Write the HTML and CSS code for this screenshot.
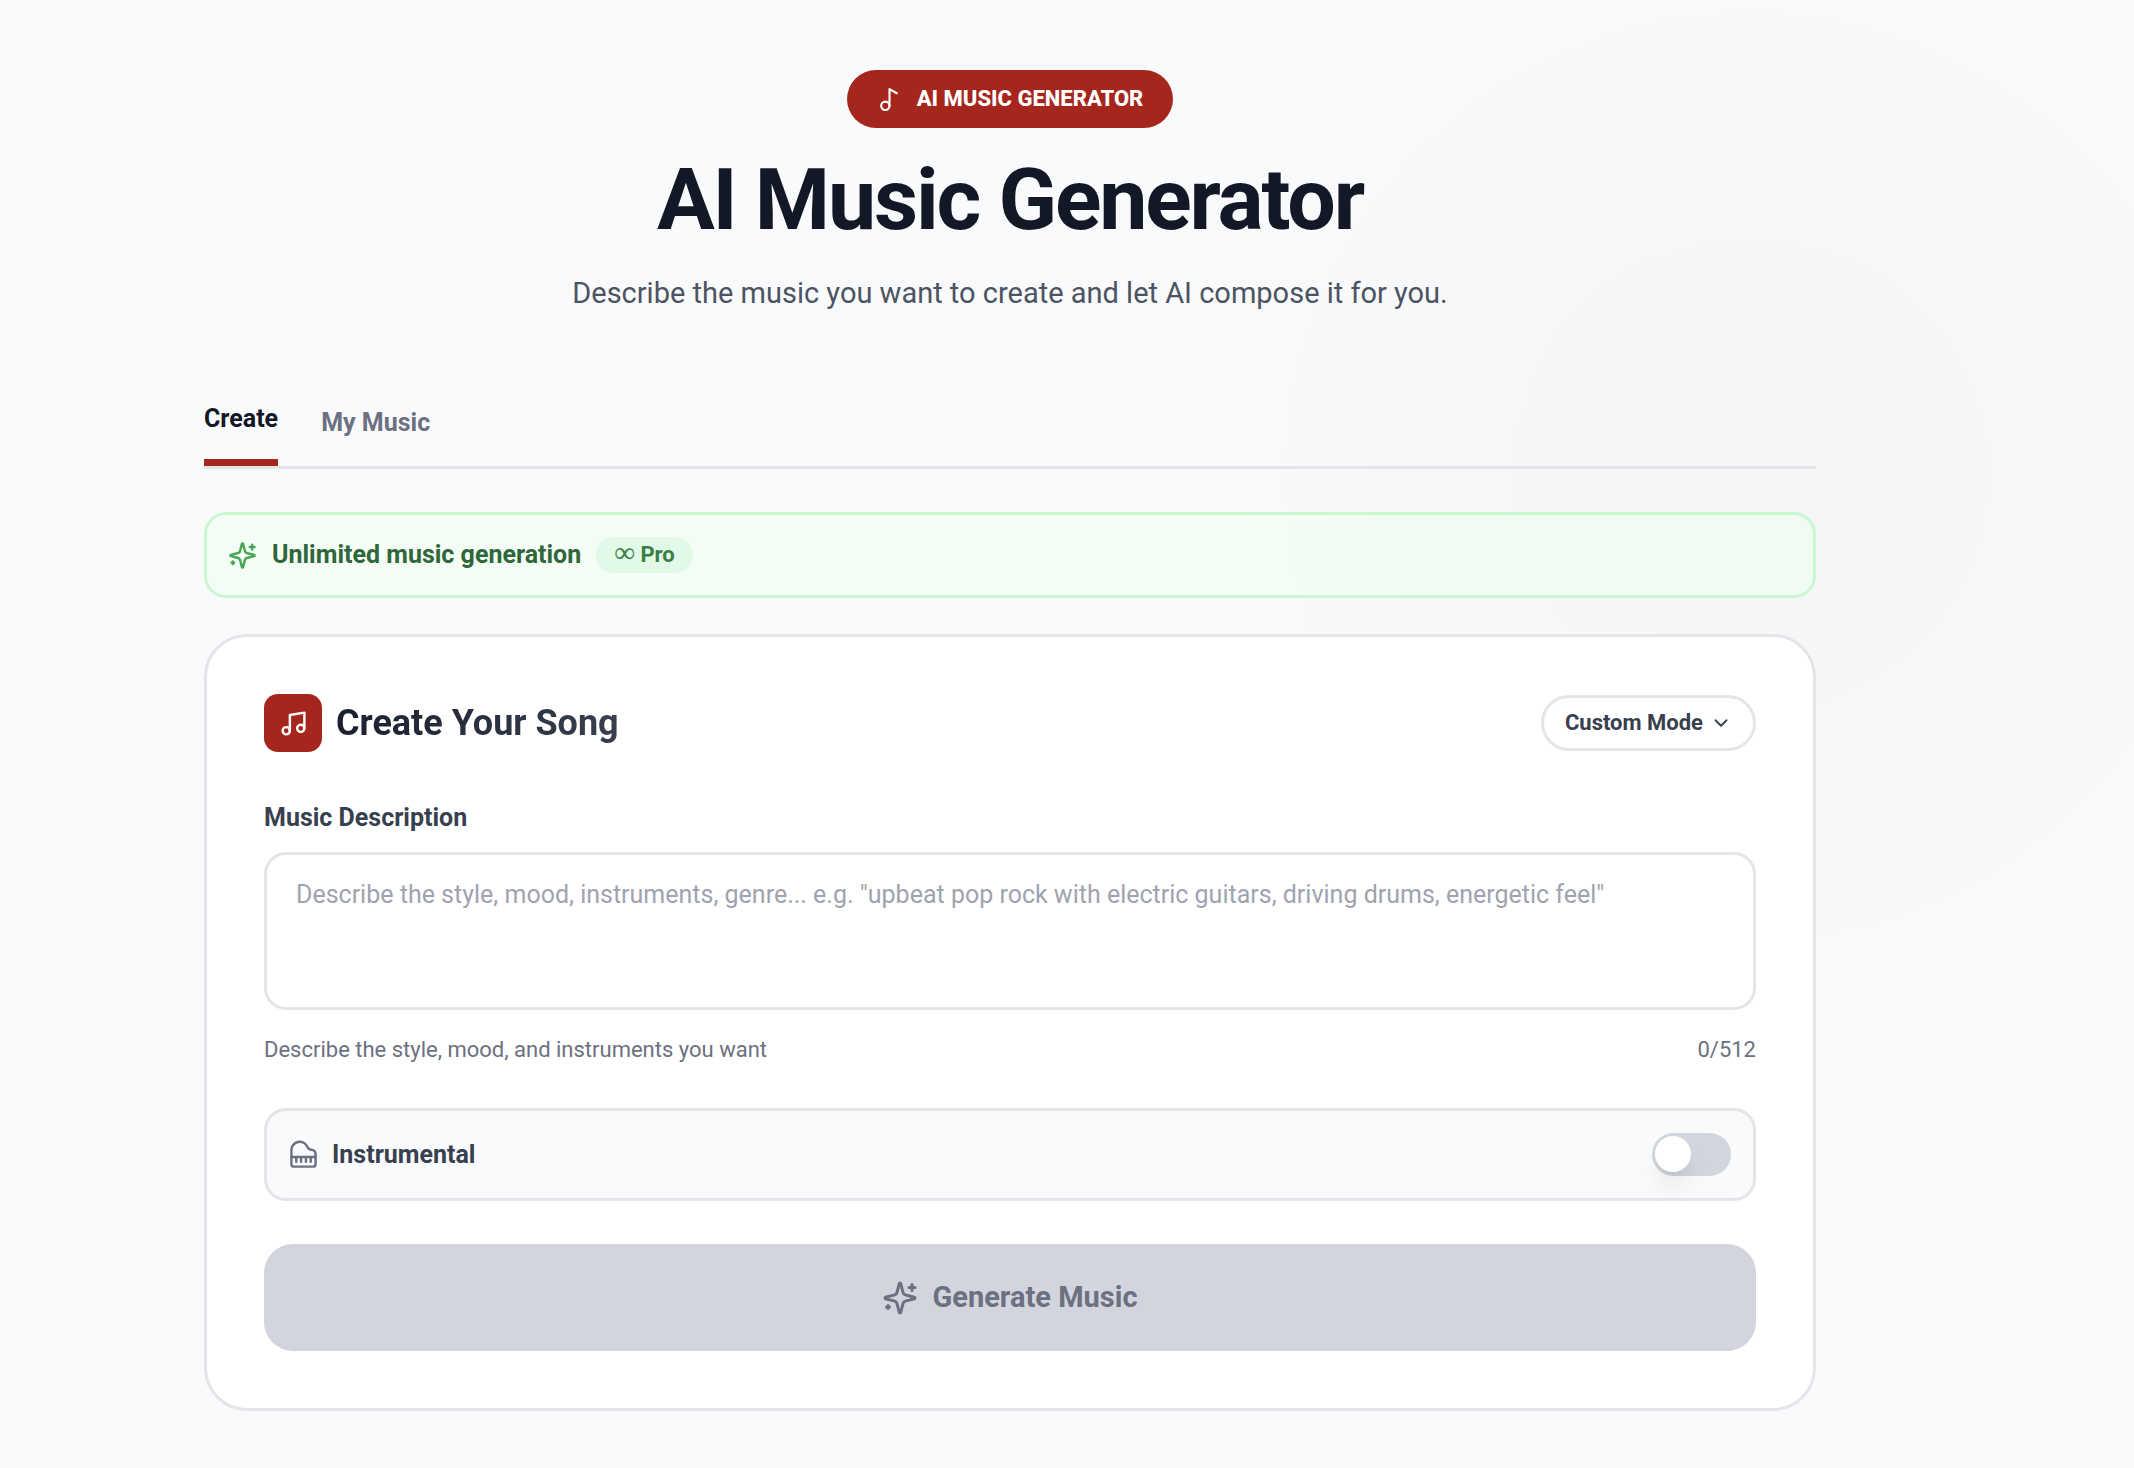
FILE: index.html
```html
<!DOCTYPE html>
<html lang="en">
<head>
  <meta charset="UTF-8" />
  <meta name="viewport" content="width=device-width, initial-scale=1.0" />
  <title>AI Music Generator</title>
  <link rel="stylesheet" href="styles.css">
</head>
<body>
  <main class="container">
    <header class="hero">
      <div class="badge">
        <svg class="icon icon-sm" viewBox="0 0 24 24"><circle cx="8" cy="18" r="4"/><path d="M12 18V2l7 4"/></svg>
        <span>AI MUSIC GENERATOR</span>
      </div>
      <h1>AI Music Generator</h1>
      <p>Describe the music you want to create and let AI compose it for you.</p>
    </header>

    <nav class="tabs">
      <button type="button" class="tab active">Create</button>
      <button type="button" class="tab">My Music</button>
    </nav>

    <div class="plan">
      <svg class="icon" viewBox="0 0 24 24"><path d="M9.937 15.5A2 2 0 0 0 8.5 14.063l-6.135-1.582a.5.5 0 0 1 0-.962L8.5 9.936A2 2 0 0 0 9.937 8.5l1.582-6.135a.5.5 0 0 1 .963 0L14.063 8.5A2 2 0 0 0 15.5 9.937l6.135 1.581a.5.5 0 0 1 0 .964L15.5 14.063a2 2 0 0 0-1.437 1.437l-1.582 6.135a.5.5 0 0 1-.963 0z"/><path d="M20 3v4M22 5h-4M4 17v2M5 18H3"/></svg>
      <span class="plan-text">Unlimited music generation</span>
      <span class="plan-tag"><span class="infinity">∞</span> Pro</span>
    </div>

    <form class="card">
      <div class="card-head">
        <div class="card-icon">
          <svg class="icon" viewBox="0 0 24 24"><path d="M9 18V5l12-2v13"/><circle cx="6" cy="18" r="3"/><circle cx="18" cy="16" r="3"/></svg>
        </div>
        <h2>Create Your Song</h2>
        <button type="button" class="mode-btn" aria-expanded="false">
          Custom Mode
          <svg class="icon icon-xs" viewBox="0 0 24 24"><path d="m6 9 6 6 6-6"/></svg>
        </button>
      </div>

      <div class="field">
        <label for="description">Music Description</label>
        <textarea id="description" maxlength="512" placeholder="Describe the style, mood, instruments, genre... e.g. &quot;upbeat pop rock with electric guitars, driving drums, energetic feel&quot;"></textarea>
        <div class="hint">
          <span>Describe the style, mood, and instruments you want</span>
          <span>0/512</span>
        </div>
      </div>

      <div class="option">
        <svg class="icon" viewBox="0 0 24 24"><path d="M18.5 8c-1.4 0-2.6-.8-3.2-2A6.87 6.87 0 0 0 2 9v11a2 2 0 0 0 2 2h16a2 2 0 0 0 2-2v-8.5C22 9.6 20.4 8 18.5 8"/><path d="M2 14h20M6 14v4M10 14v4M14 14v4M18 14v4"/></svg>
        <label for="instrumental">Instrumental</label>
        <input type="checkbox" id="instrumental" class="switch">
      </div>

      <button type="submit" class="generate" disabled>
        <svg class="icon icon-lg" viewBox="0 0 24 24"><path d="M9.937 15.5A2 2 0 0 0 8.5 14.063l-6.135-1.582a.5.5 0 0 1 0-.962L8.5 9.936A2 2 0 0 0 9.937 8.5l1.582-6.135a.5.5 0 0 1 .963 0L14.063 8.5A2 2 0 0 0 15.5 9.937l6.135 1.581a.5.5 0 0 1 0 .964L15.5 14.063a2 2 0 0 0-1.437 1.437l-1.582 6.135a.5.5 0 0 1-.963 0z"/><path d="M20 3v4M22 5h-4M4 17v2M5 18H3"/></svg>
        Generate Music
      </button>
    </form>
  </main>
</body>
</html>
```
FILE: styles.css
```css
* {
  box-sizing: border-box;
}

body {
  margin: 0;
  min-height: 100vh;
  padding: 70px 114px 57px 0;
  font-family: Roboto, "Liberation Sans", sans-serif;
  font-size: 25px;
  line-height: 36px;
  color: #384050;
  background: radial-gradient(circle at 82% 475px, #f4f5f7 0, #f6f7f8 240px, #f9fafc 580px) #f9fafc;
}

button, textarea {
  font-family: inherit;
  font-size: inherit;
  line-height: inherit;
  color: inherit;
}

button {
  border: none;
  background: none;
  cursor: pointer;
}

h1, h2, p {
  margin: 0;
}

.container {
  width: 80%;
  max-width: 1612px;
  margin: 0 auto;
}

.icon {
  flex: none;
  width: 29px;
  height: 29px;
  fill: none;
  stroke: currentColor;
  stroke-width: 2;
  stroke-linecap: round;
  stroke-linejoin: round;
}

.icon-xs {
  width: 22px;
  height: 22px;
}

.icon-sm {
  width: 25px;
  height: 25px;
}

.icon-lg {
  width: 36px;
  height: 36px;
}

/* Hero */
.hero {
  display: flex;
  flex-direction: column;
  align-items: center;
  gap: 29px;
  text-align: center;
}

.badge {
  display: flex;
  align-items: center;
  gap: 15px;
  padding: 14px 30px;
  border-radius: 29px;
  background: #a5261d;
  color: white;
  font-size: 22px;
  line-height: 30px;
  font-weight: 800;
}

h1 {
  font-size: 86px;
  line-height: 86px;
  font-weight: 700;
  letter-spacing: -0.025em;
  color: #121826;
}

.hero p {
  font-size: 29px;
  line-height: 43px;
  color: #4c5462;
}

/* Tabs */
.tabs {
  display: flex;
  gap: 43px;
  margin-top: 64px;
  border-bottom: 3px solid #e4e5e9;
}

.tab {
  padding: 22px 0;
  font-weight: 700;
  color: #6c7080;
}

.tab.active {
  border-bottom: 7px solid #a5261d;
  color: #121826;
}

/* Plan notice */
.plan {
  display: flex;
  align-items: center;
  gap: 15px;
  margin: 43px 0 36px;
  padding: 22px 21px;
  border: 3px solid #c8f7d2;
  border-radius: 22px;
  background: rgba(240, 255, 240, 0.6);
  color: #4ba556;
}

.plan-text {
  font-weight: 700;
  color: #2f673b;
}

.plan-tag {
  padding: 0 18px;
  border-radius: 18px;
  background: #e2f9e7;
  color: #3a8046;
  font-size: 22px;
  font-weight: 700;
}

.infinity {
  font-family: "Liberation Serif", serif;
  font-weight: 400;
  font-size: 29px;
  line-height: 22px;
}

/* Form card */
.card {
  display: flex;
  flex-direction: column;
  gap: 43px;
  padding: 57px;
  border: 3px solid #e4e5e9;
  border-radius: 43px;
  background: white;
}

.card-head {
  display: flex;
  align-items: center;
  gap: 14px;
}

.card-icon {
  display: flex;
  align-items: center;
  justify-content: center;
  width: 58px;
  height: 58px;
  border-radius: 14px;
  background: #a5261d;
  color: white;
}

h2 {
  font-size: 36px;
  line-height: 50px;
  font-weight: 700;
  background: linear-gradient(to right, #1a202e, #384050);
  background-clip: text;
  -webkit-background-clip: text;
  color: transparent;
}

.mode-btn {
  display: flex;
  align-items: center;
  gap: 7px;
  margin-left: auto;
  padding: 10px 21px;
  border: 3px solid #e4e5e9;
  border-radius: 28px;
  background: white;
  font-size: 22px;
  line-height: 30px;
  font-weight: 700;
}

.field {
  display: flex;
  flex-direction: column;
  gap: 16px;
  padding-top: 5px;
}

label {
  font-weight: 700;
}

textarea {
  display: block;
  width: 100%;
  height: 158px;
  padding: 22px 29px;
  border: 3px solid #e4e5e9;
  border-radius: 22px;
  background: white;
  resize: none;
}

textarea::placeholder {
  color: #9fa3b0;
}

.hint {
  display: flex;
  justify-content: space-between;
  padding-top: 9px;
  font-size: 22px;
  line-height: 30px;
  color: #6c7080;
}

.option {
  display: flex;
  align-items: center;
  gap: 14px;
  padding: 22px;
  border: 3px solid #e4e5e9;
  border-radius: 22px;
  background: #f9fafc;
}

.option .icon {
  color: #6c7080;
}

.switch {
  appearance: none;
  width: 79px;
  height: 43px;
  margin: 0 0 0 auto;
  padding: 3px;
  border-radius: 22px;
  background: #d2d5dd;
  cursor: pointer;
}

.switch::before {
  content: "";
  display: block;
  width: 36px;
  height: 36px;
  border-radius: 50%;
  background: white;
  box-shadow: 0 18px 27px -5px rgba(0, 0, 0, 0.1), 0 7px 11px -7px rgba(0, 0, 0, 0.1);
}

.switch:checked {
  background: #a5261d;
}

.switch:checked::before {
  margin-left: auto;
}

.generate {
  display: flex;
  align-items: center;
  justify-content: center;
  gap: 14px;
  padding: 32px;
  border-radius: 29px;
  background: #d2d5dd;
  color: #6c7080;
  font-size: 29px;
  line-height: 43px;
  font-weight: 700;
  cursor: not-allowed;
}
```
